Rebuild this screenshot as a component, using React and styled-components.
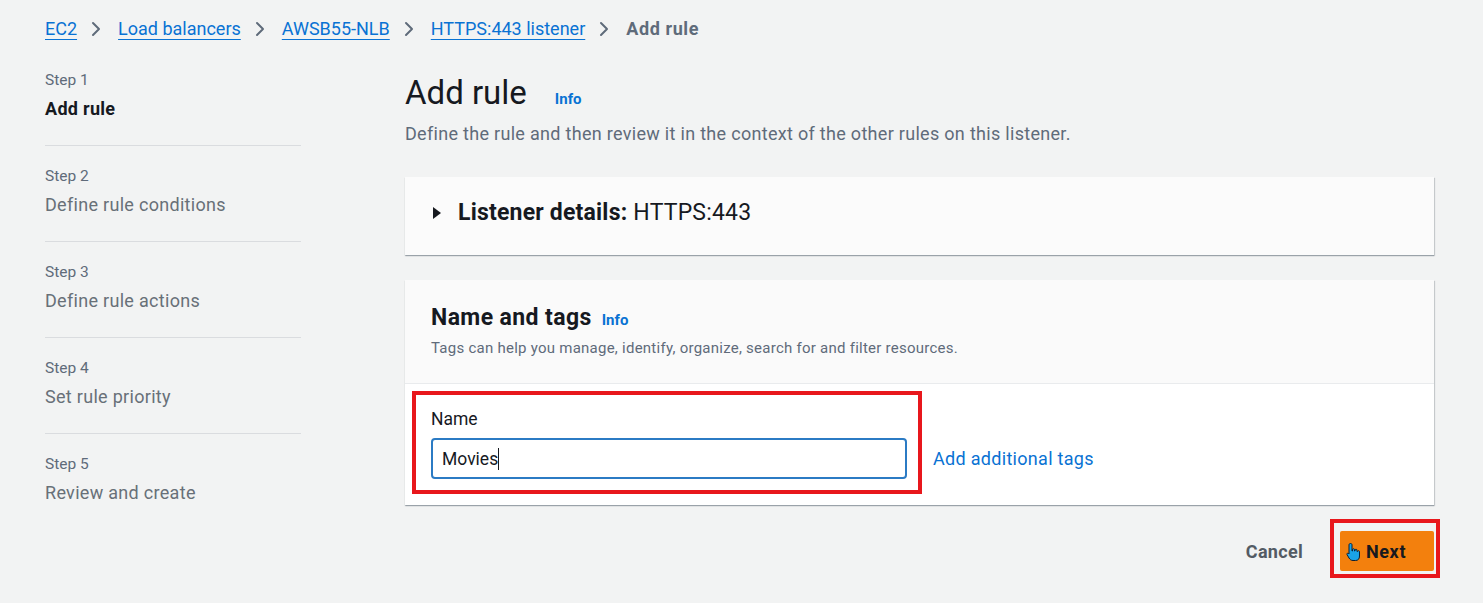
import styled, { createGlobalStyle } from "styled-components";

const GlobalStyle = createGlobalStyle`
  html, body {
    margin: 0;
    padding: 0;
    background: #f2f3f3;
    font-family: Roboto, "Liberation Sans", Arial, sans-serif;
    color: #16191f;
  }
`;

const Page = styled.div`
  width: 1483px;
  height: 603px;
  box-sizing: border-box;
  padding: 16px 49px 0 45px;
  overflow: hidden;
`;

const Crumbs = styled.nav`
  display: flex;
  align-items: center;
  height: 26px;
  font-size: 18px;
  line-height: 26px;
`;

const CrumbLink = styled.a`
  color: #0972d3;
  text-decoration: underline;
  text-underline-offset: 4px;
  text-decoration-thickness: 1px;
`;

const CrumbCurrent = styled.span`
  color: #5f6b7a;
  font-weight: 700;
  letter-spacing: 0.6px;
`;

const Chevron = styled.svg`
  width: 10px;
  height: 16px;
  margin: 0 17px 0 14px;
  flex: none;
`;

const Layout = styled.div`
  display: grid;
  grid-template-columns: 256px 1029px;
  column-gap: 104px;
  margin-top: 27px;
`;

const Steps = styled.ol`
  list-style: none;
  margin: 0;
  padding: 0;
`;

const StepItem = styled.li`
  padding: ${(p) => (p.$first ? "1px" : "20px")} 0 24px;
  border-bottom: ${(p) => (p.$last ? "none" : "1px solid #dadcdf")};
`;

const StepLabel = styled.div`
  font-size: 15.5px;
  line-height: 20px;
  color: #5f6b7a;
  margin-bottom: 7px;
`;

const StepTitle = styled.div`
  font-size: 18px;
  line-height: 24px;
  letter-spacing: 0.3px;
  color: ${(p) => (p.$active ? "#16191f" : "#687078")};
  font-weight: ${(p) => (p.$active ? 700 : 400)};
`;

const Main = styled.main`
  display: flex;
  flex-direction: column;
`;

const HeadingRow = styled.div`
  display: flex;
  align-items: baseline;
  gap: 28px;
  margin-top: 2px;
`;

const Heading = styled.h1`
  margin: 0;
  font-size: 33px;
  line-height: 44px;
  font-weight: 400;
`;

const Info = styled.a`
  color: #0972d3;
  font-weight: 700;
  font-size: 15px;
`;

const Description = styled.p`
  margin: 8px 0 0;
  font-size: 18px;
  line-height: 22px;
  letter-spacing: 0.3px;
  color: #5f6b7a;
`;

const Card = styled.section`
  background: #fbfbfb;
  box-shadow: 0 1px 1px 0 rgba(0, 22, 40, 0.25), 1px 1px 1px 0 rgba(0, 22, 40, 0.15);
  margin-top: ${(p) => p.$mt || 0}px;
`;

const Expander = styled.div`
  display: flex;
  align-items: center;
  padding: 21px 27px 27px;
  font-size: 23px;
  line-height: 30px;
  letter-spacing: 0.2px;
`;

const Caret = styled.svg`
  width: 10px;
  height: 12px;
  margin-right: 16px;
`;

const Strong = styled.span`
  font-weight: 700;
  margin-right: 6px;
`;

const CardHeader = styled.div`
  background: #fafafa;
  border-bottom: 1px solid #e9ebed;
  padding: 24px 26px 25px;
`;

const TitleRow = styled.div`
  display: flex;
  align-items: baseline;
  gap: 10px;
`;

const CardTitle = styled.h2`
  margin: 0;
  font-size: 23px;
  line-height: 28px;
  letter-spacing: 0.4px;
  font-weight: 700;
`;

const CardSub = styled.p`
  margin: 6px 0 0;
  font-size: 15px;
  line-height: 20px;
  letter-spacing: 0.25px;
  color: #5f6b7a;
`;

const CardBody = styled.div`
  background: #ffffff;
  display: flex;
  align-items: center;
  padding: 7px 12px 11px 7px;
`;

const Highlight = styled.div`
  border: 4px solid #e8171c;
  box-sizing: border-box;
  padding: ${(p) => p.$pad};
  width: ${(p) => p.$w};
`;

const FieldLabel = styled.div`
  font-size: 17.5px;
  line-height: 22px;
  margin-bottom: 8px;
`;

const Input = styled.div`
  box-sizing: border-box;
  width: 476px;
  height: 41px;
  border: 2px solid #2b7bc4;
  border-radius: 4px;
  display: flex;
  align-items: center;
  padding: 0 9px;
  font-size: 17.5px;
  background: #fff;
`;

const TextCaret = styled.span`
  display: inline-block;
  width: 1px;
  height: 22px;
  background: #16191f;
`;

const TagLink = styled.a`
  color: #0972d3;
  font-size: 18px;
  line-height: 22px;
  letter-spacing: 0.3px;
  margin-left: 11px;
  padding-top: 32px;
`;

const Footer = styled.div`
  display: flex;
  justify-content: flex-end;
  align-items: center;
  margin-top: 14px;
  margin-right: -6px;
`;

const CancelButton = styled.button`
  background: none;
  border: none;
  font-family: inherit;
  font-size: 18px;
  letter-spacing: 0.3px;
  font-weight: 700;
  color: #545b64;
  padding: 0;
  margin-right: 27px;
  margin-top: 5px;
`;

const PrimaryButton = styled.button`
  position: relative;
  width: 94px;
  height: 40px;
  box-sizing: border-box;
  background: #f3800d;
  border: none;
  border-radius: 2px;
  font-family: inherit;
  font-size: 18px;
  letter-spacing: 0.6px;
  font-weight: 700;
  color: #16191f;
  padding: 0 0 0 26px;
  text-align: left;
`;

const Pointer = styled.svg`
  position: absolute;
  left: 6px;
  top: 11px;
  width: 15px;
  height: 20px;
`;

const ChevronIcon = () => (
  <Chevron viewBox="0 0 10 16">
    <polyline points="2,2 8,8 2,14" fill="none" stroke="#5f6b7a" strokeWidth="2" strokeLinecap="round" strokeLinejoin="round" />
  </Chevron>
);

const steps = [
  { label: "Step 1", title: "Add rule", active: true },
  { label: "Step 2", title: "Define rule conditions" },
  { label: "Step 3", title: "Define rule actions" },
  { label: "Step 4", title: "Set rule priority" },
  { label: "Step 5", title: "Review and create" },
];

const crumbs = ["EC2", "Load balancers", "AWSB55-NLB", "HTTPS:443 listener"];

export default function App() {
  return (
    <Page>
      <GlobalStyle />
      <Crumbs>
        {crumbs.map((c) => (
          <span key={c} style={{ display: "contents" }}>
            <CrumbLink>{c}</CrumbLink>
            <ChevronIcon />
          </span>
        ))}
        <CrumbCurrent>Add rule</CrumbCurrent>
      </Crumbs>

      <Layout>
        <Steps>
          {steps.map((s, i) => (
            <StepItem key={s.label} $first={i === 0} $last={i === steps.length - 1}>
              <StepLabel>{s.label}</StepLabel>
              <StepTitle $active={s.active}>{s.title}</StepTitle>
            </StepItem>
          ))}
        </Steps>

        <Main>
          <HeadingRow>
            <Heading>Add rule</Heading>
            <Info>Info</Info>
          </HeadingRow>
          <Description>
            Define the rule and then review it in the context of the other rules on this listener.
          </Description>

          <Card $mt={32}>
            <Expander>
              <Caret viewBox="0 0 10 12">
                <polygon points="1,0 9,6 1,12" fill="#16191f" />
              </Caret>
              <Strong>Listener details:</Strong>
              HTTPS:443
            </Expander>
          </Card>

          <Card $mt={25}>
            <CardHeader>
              <TitleRow>
                <CardTitle>Name and tags</CardTitle>
                <Info>Info</Info>
              </TitleRow>
              <CardSub>Tags can help you manage, identify, organize, search for and filter resources.</CardSub>
            </CardHeader>
            <CardBody>
              <Highlight $pad="13px 11px 11px 15px" $w="510px">
                <FieldLabel>Name</FieldLabel>
                <Input>
                  Movies
                  <TextCaret />
                </Input>
              </Highlight>
              <TagLink>Add additional tags</TagLink>
            </CardBody>
          </Card>

          <Footer>
            <CancelButton>Cancel</CancelButton>
            <Highlight $pad="8px 3px 3px 6px" $w="110px">
              <PrimaryButton>
                Next
                <Pointer viewBox="0 0 15 20">
                  <path
                    d="M4.5 1.5 C5.5 1.5 6 2 6 3 L6 9 L6.5 9 L6.5 7.5 C6.5 6.5 8.5 6.5 8.5 7.5 L8.5 9 L9 9 L9 8 C9 7 11 7 11 8 L11 9.5 L11.5 9.5 C11.5 8.5 13.5 8.5 13.5 9.5 L13.5 14 C13.5 17 12 18.5 9.5 18.5 L7 18.5 C5 18.5 4 17.5 3 16 L1 12.5 C0.5 11.5 1.8 10.7 2.6 11.5 L3 12 L3 3 C3 2 3.5 1.5 4.5 1.5 Z"
                    fill="#1aa3e8"
                    stroke="#0b1f33"
                    strokeWidth="1"
                    strokeLinejoin="round"
                  />
                </Pointer>
              </PrimaryButton>
            </Highlight>
          </Footer>
        </Main>
      </Layout>
    </Page>
  );
}
